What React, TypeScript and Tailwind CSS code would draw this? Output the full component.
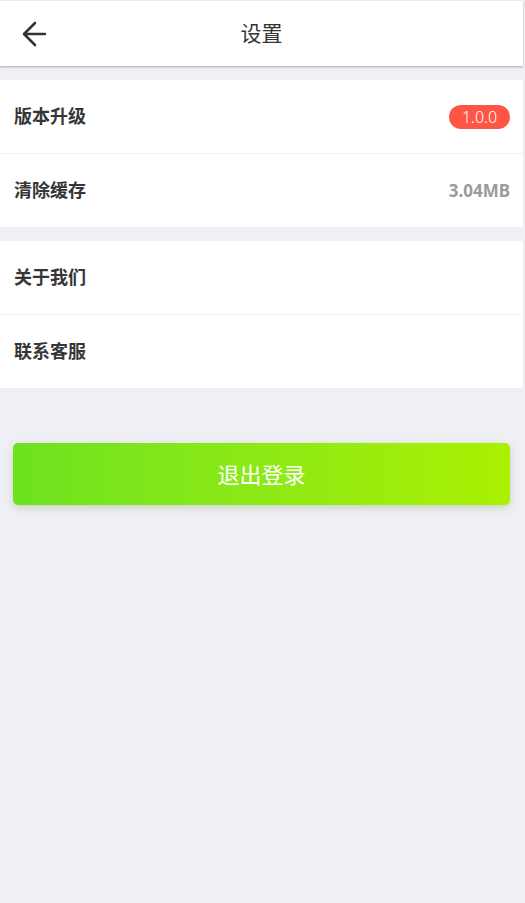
import React from "react";

const font = { fontFamily: '"Noto Sans", "Noto Sans CJK SC", sans-serif' };

function Row({ label, right, border }: { label: string; right?: React.ReactNode; border?: boolean }) {
  return (
    <div className={`flex items-center justify-between bg-white pl-[14px] pr-[13px] ${border ? "h-[74px] border-b border-[#f1f1f3]" : "h-[73px]"}`}>
      <span className="text-[18px] font-bold text-[#363636]">{label}</span>
      {right}
    </div>
  );
}

export default function App() {
  return (
    <div className="min-h-[903px] w-[525px] bg-[#eff0f5]" style={font}>
      <div className="w-[523px] pt-px min-h-[903px] bg-[#eff0f4]">
        <div className="relative flex h-[65px] items-center justify-center bg-white shadow-[0_1px_2px_rgba(0,0,0,0.28)]">
          <svg className="absolute left-[20px] top-[18px]" width="28" height="30" viewBox="0 0 28 30" fill="none">
            <path d="M25 15H5M15 4L4 15L15 26" stroke="#333" strokeWidth="2.6" strokeLinecap="round" strokeLinejoin="round" />
          </svg>
          <span className="text-[21px] text-[#333333]">设置</span>
        </div>
        <div className="mt-[14px] bg-white">
          <Row
            label="版本升级"
            border
            right={
              <span className="flex h-[24px] w-[61px] items-center justify-center rounded-full bg-[#fe5545] text-[16px] font-light leading-none text-white">
                1.0.0
              </span>
            }
          />
          <Row label="清除缓存" right={<span className="text-[17px] font-bold text-[#9b9b9b]">3.04MB</span>} />
        </div>
        <div className="mt-[14px] bg-white">
          <Row label="关于我们" border />
          <Row label="联系客服" />
        </div>
        <div className="px-[13px] pt-[55px]">
          <button className="flex h-[62px] w-full items-center justify-center rounded-[5px] bg-gradient-to-r from-[#6ce21f] to-[#aaf000] text-[22px] text-white shadow-[0_3px_8px_rgba(120,150,90,0.3)]">
            退出登录
          </button>
        </div>
      </div>
    </div>
  );
}
